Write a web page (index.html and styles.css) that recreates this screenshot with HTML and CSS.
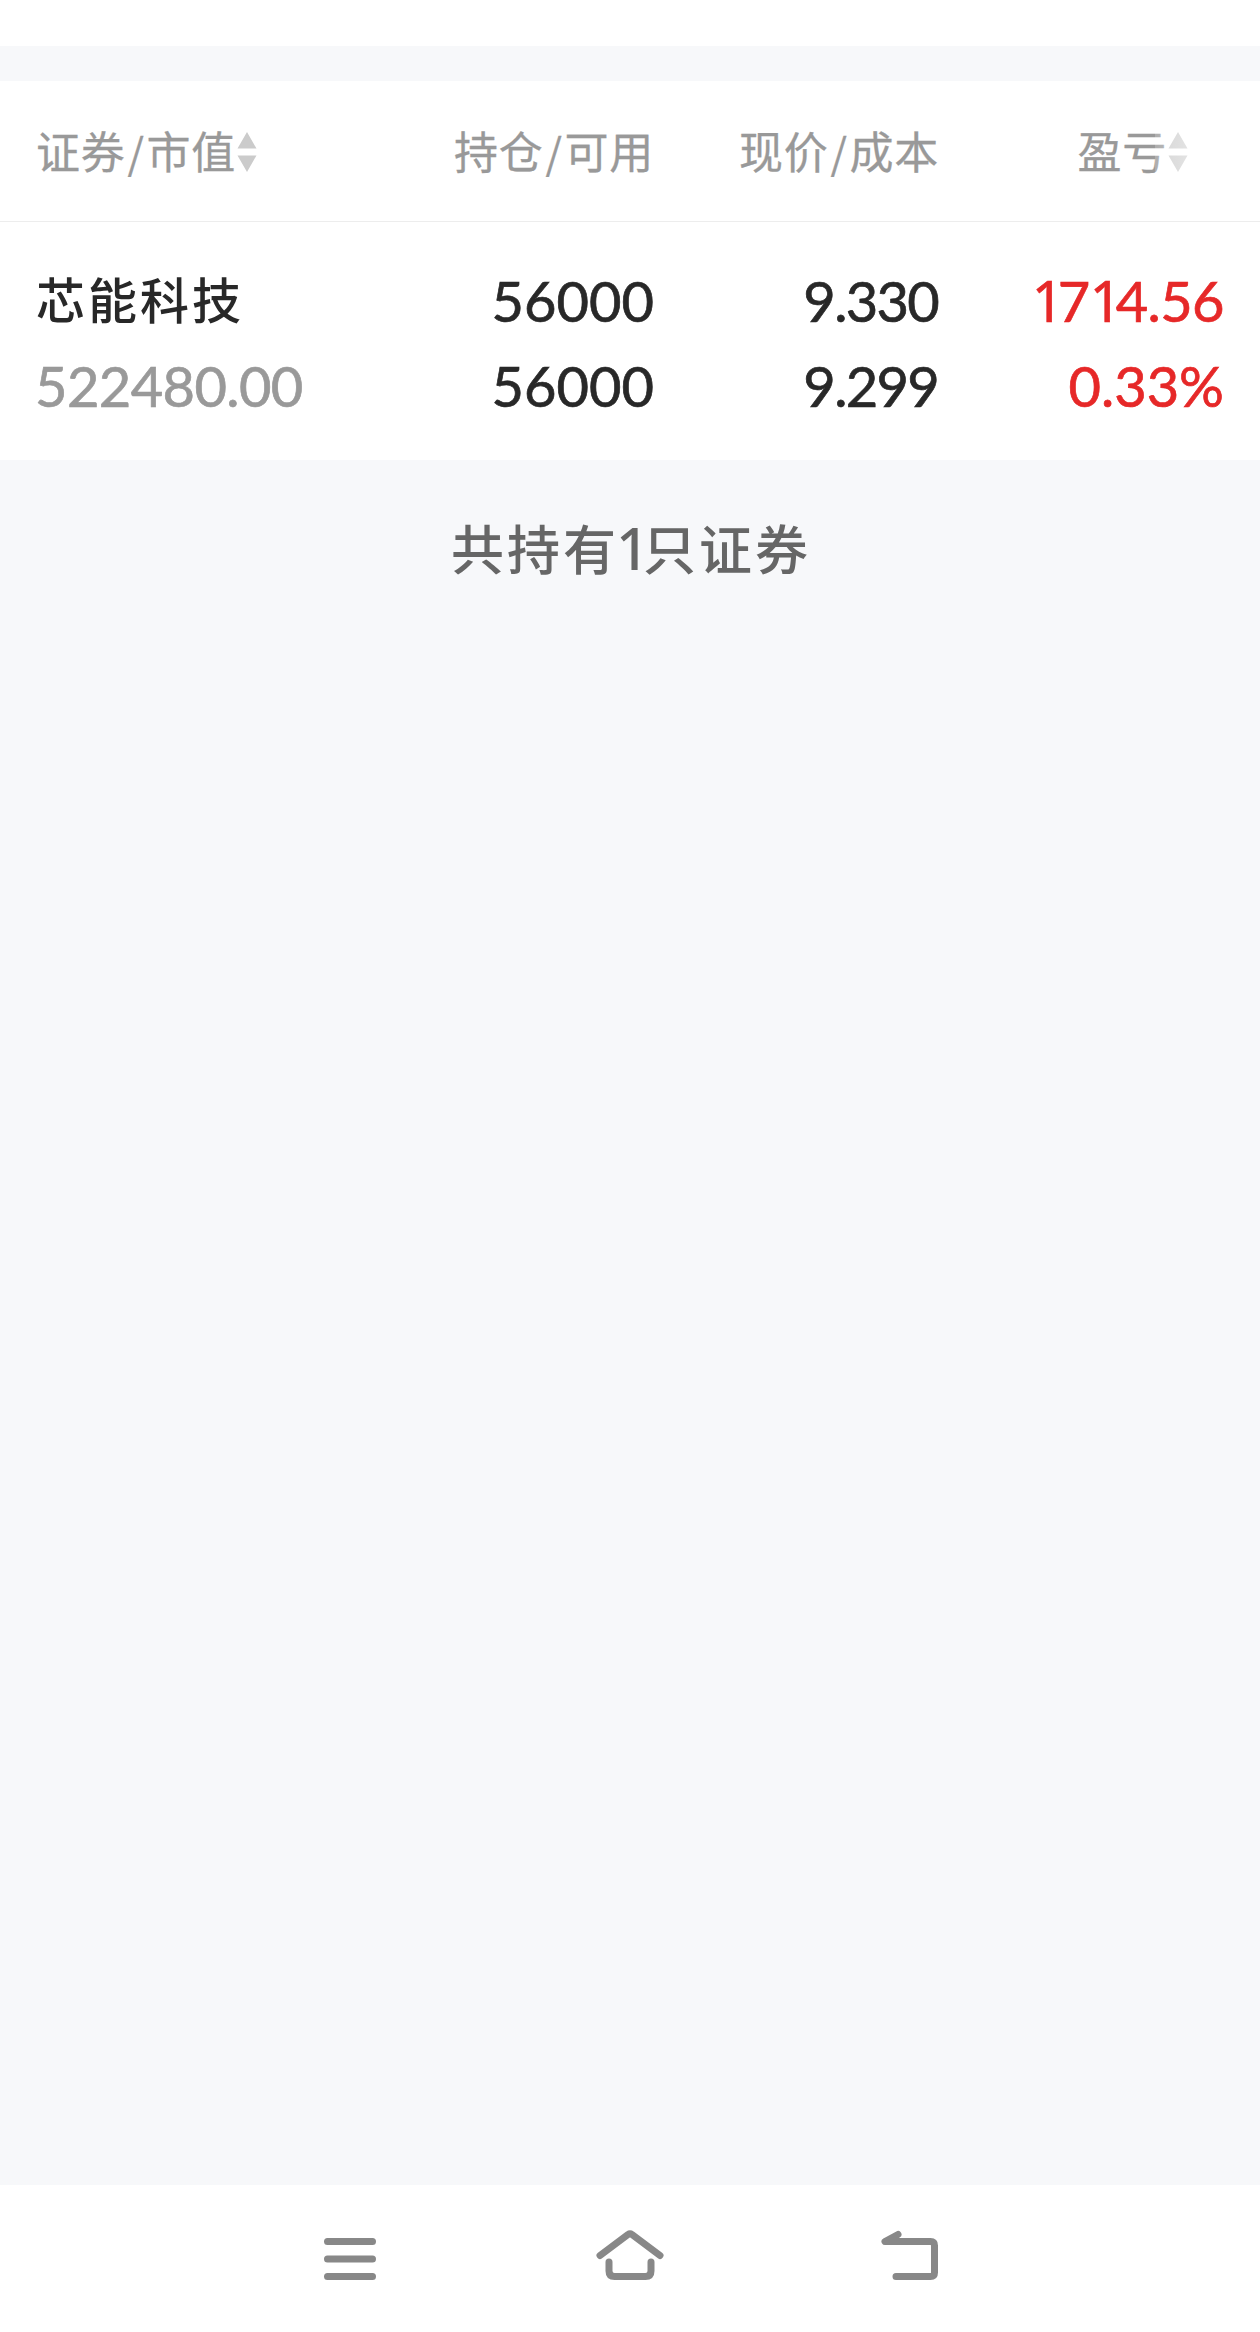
FILE: index.html
```html
<!DOCTYPE html>
<html lang="zh-CN">
<head>
    <meta charset="UTF-8">
    <meta name="viewport" content="width=device-width, initial-scale=1.0">
    <title>持仓</title>
    <link rel="stylesheet" href="styles.css">
</head>
<body>
    <div class="top"></div>
    <div class="table">
        <div class="row head">
            <div class="cell left">证券<span class="slash">/</span>市值<svg class="sort" viewBox="0 0 20 42"><path d="M10 1L19.500 17.500H.5zM10 41L19.500 24.500H.5z"/></svg></div>
            <div class="cell">持仓<span class="slash">/</span>可用</div>
            <div class="cell">现价<span class="slash">/</span>成本</div>
            <div class="cell profit">盈亏<svg class="sort" viewBox="0 0 20 42"><path d="M10 1L19.500 17.500H.5zM10 41L19.500 24.500H.5z"/></svg></div>
            <div class="fade"></div>
        </div>
        <div class="row stock">
            <div class="cell left">
                <div class="name">芯能科技</div>
                <div class="value">522480.00</div>
            </div>
            <div class="cell">
                <div>56000</div>
                <div>56000</div>
            </div>
            <div class="cell">
                <div class="price">9.330</div>
                <div class="price">9.299</div>
            </div>
            <div class="cell red">
                <div class="amount"><span class="one">1</span>7<span class="one">1</span>4.56</div>
                <div class="percent">0.33%</div>
            </div>
        </div>
    </div>
    <div class="summary">共持有<span class="count">1</span>只证券</div>
    <div class="nav">
        <svg class="icon" viewBox="0 0 70 54"><path d="M12.5 11.5h45M12.5 29h45M12.5 46.5h45"/></svg>
        <svg class="icon" viewBox="0 0 70 54"><path d="M5 25.5L33 4.500a3.500 3.500 0 0 1 4 0L65 25.5M14 32v9q0 5.500 5.500 5.500h31q5.500 0 5.500-5.500v-9"/></svg>
        <svg class="icon" viewBox="0 0 70 54"><path d="M23 4.500L10 11.500h45.500q4 0 4 4v27q0 4-4 4H21"/></svg>
    </div>
</body>
</html>
```
FILE: styles.css
```css
body {
    display: flex;
    flex-direction: column;
    height: 100vh;
    margin: 0;
    font-family: Lato, "Noto Sans CJK SC", sans-serif;
    background-color: #f7f8fa;
}

.top {
    height: 46px;
    margin-bottom: 35px;
    background-color: white;
}

.table {
    background-color: white;
}

.row {
    display: grid;
    grid-template-columns: 333px 285px 285px 285px;
    padding: 0 36px;
    text-align: right;
    white-space: nowrap;
}

.head {
    position: relative;
    height: 140px;
    line-height: 138px;
    border-bottom: 1px solid #ededed;
    font-family: "Noto Sans CJK SC", sans-serif;
    font-size: 44px;
    letter-spacing: 0.7px;
    color: #999;
    -webkit-text-stroke: 0.3px;
}

.slash {
    margin: 0 2px;
    font-size: 42px;
}

.cell.left {
    text-align: left;
}

.profit {
    padding-right: 36px;
}

.sort {
    width: 20px;
    height: 42px;
    margin-left: 1px;
    vertical-align: -4px;
    fill: #cbcbcb;
    stroke: none;
}

.fade {
    position: absolute;
    top: 0;
    right: 0;
    width: 105px;
    height: 138px;
    background: linear-gradient(to right, rgba(255, 255, 255, 0.2), rgba(255, 255, 255, 1));
}

.stock {
    padding-top: 36px;
    padding-bottom: 32px;
    font-size: 56px;
    line-height: 85px;
    color: #282828;
    -webkit-text-stroke: 0.7px;
}

.name {
    height: 85px;
    line-height: 84px;
    font-size: 49px;
    font-weight: 500;
    letter-spacing: 3px;
    -webkit-text-stroke: 0;
}

.value {
    margin-left: -1px;
    letter-spacing: -0.6px;
    color: #999;
}

.price {
    padding-right: 1px;
    letter-spacing: -1.7px;
}

.red {
    color: #e62828;
}

.amount {
    letter-spacing: -0.6px;
}

/* narrow figure without a foot */
.one {
    font-family: "Noto Sans", sans-serif;
    letter-spacing: -6px;
}

.summary {
    flex: 1;
    padding-top: 45px;
    padding-left: 2px;
    text-align: center;
    font-size: 53px;
    line-height: 90px;
    font-weight: 500;
    letter-spacing: 3px;
    color: #666;
}

.count {
    font-family: "Noto Sans", sans-serif;
    font-size: 58px;
    line-height: 1;
    letter-spacing: -6px;
    margin-left: -3px;
}

.nav {
    display: flex;
    justify-content: center;
    gap: 210px;
    height: 147px;
    background-color: white;
}

.icon {
    width: 70px;
    height: 54px;
    margin-top: 45px;
    fill: none;
    stroke: #888;
    stroke-width: 7;
    stroke-linecap: round;
    stroke-linejoin: round;
}
```
